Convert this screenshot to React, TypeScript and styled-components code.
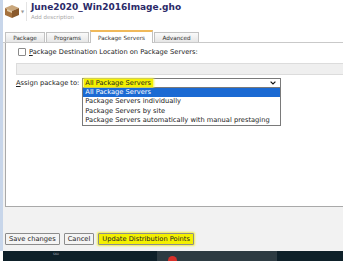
import React from "react";
import styled, { createGlobalStyle } from "styled-components";

const Global = createGlobalStyle`
  html, body { margin: 0; padding: 0; background: #fff; }
  body { font-family: "DejaVu Sans", Verdana, sans-serif; }
  #root { width: 343px; height: 261px; overflow: hidden; }
`;

const Frame = styled.div`
  display: flex;
  flex-direction: column;
  width: 343px;
  height: 261px;
  overflow: hidden;
`;

const Upper = styled.div`
  display: flex;
  height: 251px;
`;

const Strip = styled.div`
  width: 3px;
  flex: none;
  background: #c8d6ea;
`;

const Main = styled.div`
  flex: 1;
  display: flex;
  flex-direction: column;
  min-width: 0;
  background: #f2f2f2;
`;

const Header = styled.div`
  display: flex;
  align-items: flex-start;
  gap: 1px;
  height: 28px;
  padding: 2px 0 0 1px;
  background: #fff;
  box-sizing: border-box;
`;

const IconBox = styled.div`
  display: flex;
  align-items: center;
  width: 22px;
  height: 19px;
  border-right: 1px solid #e4e4e4;
`;

const Caret = styled.span`
  font-size: 4px;
  color: #999;
  margin-left: 1px;
`;

const TitleBlock = styled.div`
  display: flex;
  flex-direction: column;
  padding-left: 3px;
`;

const Title = styled.div`
  font-weight: bold;
  font-size: 9px;
  color: #2b2a68;
  line-height: 11px;
`;

const Sub = styled.div`
  font-size: 5.5px;
  color: #a8a8a8;
  line-height: 8px;
  margin-top: 0;
`;

const TabRow = styled.div`
  display: flex;
  align-items: flex-end;
  height: 14px;
  padding-left: 2px;
  background: #fff;
  border-bottom: 1px solid #c9c9c9;
`;

const Tab = styled.div<{ $active?: boolean; $w: number }>`
  width: ${(p) => p.$w}px;
  box-sizing: border-box;
  display: flex;
  align-items: center;
  justify-content: center;
  font-size: 5.7px;
  color: #333;
  margin-right: 1px;
  border: 1px solid #c2c2c2;
  border-bottom: none;
  border-top: ${(p) => (p.$active ? "2px solid #f0b95a" : "1px solid #c2c2c2")};
  background: ${(p) => (p.$active ? "#fff" : "linear-gradient(#fafafa, #e6e6e6)")};
  margin-bottom: ${(p) => (p.$active ? "-1px" : "0")};
  height: ${(p) => (p.$active ? 13 : 10)}px;
`;

const Panel = styled.div`
  background: #fff;
  margin-left: 2px;
  height: 164px;
  border-left: 1px solid #a9a9a9;
  border-bottom: 1px solid #a9a9a9;
  display: flex;
  flex-direction: column;
  padding: 4px 0 0 10px;
  box-sizing: border-box;
  font-size: 6.7px;
  color: #222;
`;

const CheckRow = styled.label`
  display: flex;
  align-items: center;
  gap: 3px;
  height: 9px;
  padding-left: 2px;
`;

const Check = styled.span`
  width: 6px;
  height: 6px;
  border: 1px solid #8a8a8a;
  border-radius: 1px;
  background: #fff;
`;

const Disabled = styled.div`
  height: 10px;
  margin-top: 7px;
  margin-right: -10px;
  background: #efefef;
  border: 1px solid #dcdcdc;
  border-right: none;
`;

const AssignRow = styled.div`
  display: flex;
  align-items: flex-start;
  margin-top: 3px;
  gap: 4px;
`;

const AssignLabel = styled.span`
  line-height: 10px;
  margin-top: 0;
`;

const SelectWrap = styled.div`
  display: flex;
  flex-direction: column;
  width: 199px;
  margin-left: -1px;
`;

const SelectBox = styled.div`
  display: flex;
  align-items: center;
  justify-content: space-between;
  height: 10px;
  box-sizing: border-box;
  border: 1px solid #7a7a7a;
  padding: 0 4px 0 2px;
  background: #fff;
`;

const Highlight = styled.span`
  background: #f4f000;
  box-shadow: 0 0 2px 1px #f6f24a;
  padding: 0 2px 0 1px;
  margin-left: -1px;
  line-height: 8px;
`;

const Chevron = styled.svg`
  width: 6px;
  height: 4px;
`;

const List = styled.div`
  display: flex;
  flex-direction: column;
  border: 1px solid #7a7a7a;
  border-top: none;
  background: #fff;
`;

const Item = styled.div<{ $sel?: boolean }>`
  height: 9.3px;
  line-height: 9.3px;
  padding-left: 2px;
  background: ${(p) => (p.$sel ? "#1b6ad3" : "#fff")};
  color: ${(p) => (p.$sel ? "#fff" : "#222")};
`;

const Footer = styled.div`
  flex: 1;
  display: flex;
  align-items: flex-end;
  gap: 4px;
  padding: 0 0 6px 2px;
`;

const Btn = styled.button<{ $hl?: boolean }>`
  font-family: "DejaVu Sans", Verdana, sans-serif;
  font-size: 6.7px;
  color: #222;
  height: 12px;
  padding: 0 3px;
  border: 1px solid #8c8c8c;
  border-radius: 1px;
  background: ${(p) => (p.$hl ? "#f4f000" : "#f4f4f4")};
  box-shadow: ${(p) => (p.$hl ? "0 0 2px 1px #f2ef4a" : "none")};
  line-height: 10px;
`;

const Taskbar = styled.div`
  height: 10px;
  display: flex;
  align-items: stretch;
  margin-left: 3px;
  background: #0e2029;
`;

const TaskText = styled.div`
  width: 154px;
  font-size: 3px;
  color: #aab;
  padding: 1px 0 0 50px;
  box-sizing: border-box;
`;

const TaskMid = styled.div`
  width: 120px;
  background: #2d3b42;
  position: relative;
`;

const RedDot = styled.span`
  position: absolute;
  left: 11px;
  top: 5px;
  width: 9px;
  height: 9px;
  border-radius: 50%;
  background: #d8302a;
`;

function BoxIcon() {
  return (
    <svg width="16" height="15" viewBox="0 0 16 15">
      <path d="M1 4 L8 1 L15 4 L8 7 Z" fill="#c9a77c" />
      <path d="M1 4 L8 7 L8 14 L1 11 Z" fill="#a5713d" />
      <path d="M15 4 L8 7 L8 14 L15 11 Z" fill="#8a5a2c" />
      <path d="M3 5 L8 7 L8 9 L3 7 Z" fill="#e2cba5" />
    </svg>
  );
}

export default function App() {
  return (
    <>
      <Global />
      <Frame>
        <Upper>
          <Strip />
          <Main>
            <Header>
              <IconBox>
                <BoxIcon />
                <Caret>▼</Caret>
              </IconBox>
              <TitleBlock>
                <Title>June2020_Win2016Image.gho</Title>
                <Sub>Add description</Sub>
              </TitleBlock>
            </Header>
            <TabRow>
              <Tab $w={40}>Package</Tab>
              <Tab $w={43}>Programs</Tab>
              <Tab $w={63} $active>Package Servers</Tab>
              <Tab $w={45}>Advanced</Tab>
            </TabRow>
            <Panel>
              <CheckRow>
                <Check />
                <span>
                  <u>P</u>ackage Destination Location on Package Servers:
                </span>
              </CheckRow>
              <Disabled />
              <AssignRow>
                <AssignLabel>
                  <u>A</u>ssign package to:
                </AssignLabel>
                <SelectWrap>
                  <SelectBox>
                    <Highlight>All Package Servers</Highlight>
                    <Chevron viewBox="0 0 6 4">
                      <path d="M0.6 0.6 L3 3 L5.4 0.6" stroke="#111" strokeWidth="1.2" fill="none" />
                    </Chevron>
                  </SelectBox>
                  <List>
                    <Item $sel>All Package Servers</Item>
                    <Item>Package Servers individually</Item>
                    <Item>Package Servers by site</Item>
                    <Item>Package Servers automatically with manual prestaging</Item>
                  </List>
                </SelectWrap>
              </AssignRow>
            </Panel>
            <Footer>
              <Btn>Save changes</Btn>
              <Btn>Cancel</Btn>
              <Btn $hl>Update Distribution Points</Btn>
            </Footer>
          </Main>
        </Upper>
        <Taskbar>
          <TaskText>SKU</TaskText>
          <TaskMid>
            <RedDot />
          </TaskMid>
        </Taskbar>
      </Frame>
    </>
  );
}
